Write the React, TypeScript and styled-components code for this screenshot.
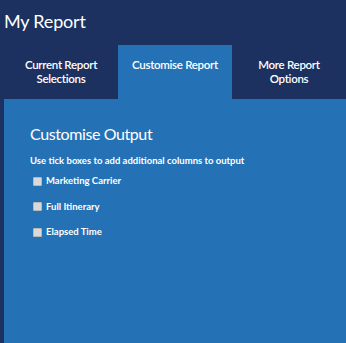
import styled, { createGlobalStyle } from 'styled-components';

const GlobalStyle = createGlobalStyle`
	html, body {
		margin: 0;
		padding: 0;
		height: 100%;
		background: #1c3160;
	}
	#root {
		height: 100%;
	}
	* {
		box-sizing: border-box;
	}
`;

const tabs = [
	{ id: 'current', label: 'Current Report Selections' },
	{ id: 'customise', label: 'Customise Report' },
	{ id: 'more', label: 'More Report Options' },
];

const columns = ['Marketing Carrier', 'Full Itinerary', 'Elapsed Time'];

export default function App() {
	const activeTab = 'customise';

	return (
		<>
			<GlobalStyle />
			<Page>
				<PageTitle>My Report</PageTitle>
				<TabBar>
					{tabs.map(tab => (
						<Tab key={tab.id} $active={tab.id === activeTab}>
							{tab.label}
						</Tab>
					))}
				</TabBar>
				<Panel>
					<PanelTitle>Customise Output</PanelTitle>
					<Hint>Use tick boxes to add additional columns to output</Hint>
					<OptionList>
						{columns.map(col => (
							<Option key={col}>
								<Box />
								{col}
							</Option>
						))}
					</OptionList>
				</Panel>
			</Page>
		</>
	);
}

const Page = styled.div`
	display: flex;
	flex-direction: column;
	height: 100%;
	padding-left: 4px;
	font-family: Lato, 'Open Sans', sans-serif;
	color: #ffffff;
`;

const PageTitle = styled.h1`
	margin: 0;
	padding: 10px 0 0 0;
	height: 45px;
	font-size: 18px;
	font-weight: 400;
	line-height: 22px;
	letter-spacing: -0.2px;
`;

const TabBar = styled.div`
	display: grid;
	grid-template-columns: repeat(3, 1fr);
	height: 54px;
`;

const Tab = styled.div<{ $active: boolean }>`
	padding: 13px 8px 0;
	text-align: center;
	font-size: 11.5px;
	font-weight: 600;
	line-height: 14px;
	letter-spacing: -0.3px;
	background: ${({ $active }) => ($active ? '#2472b5' : 'transparent')};
`;

const Panel = styled.div`
	flex: 1;
	background: #2472b5;
	padding: 25px 26px;
`;

const PanelTitle = styled.h2`
	margin: 0 0 11px;
	font-size: 16px;
	font-weight: 400;
	line-height: 20px;
	letter-spacing: -0.4px;
`;

const Hint = styled.p`
	margin: 0 0 8px;
	font-size: 9.5px;
	font-weight: 700;
	line-height: 12px;
`;

const OptionList = styled.div`
	display: flex;
	flex-direction: column;
	gap: 13.5px;
	padding-left: 3px;
`;

const Option = styled.label`
	display: flex;
	align-items: center;
	gap: 4px;
	font-size: 9.5px;
	font-weight: 700;
	line-height: 12px;
`;

const Box = styled.span`
	width: 9px;
	height: 9px;
	background: #d9d9d9;
	border: 1px solid #b8b8b8;
	border-radius: 1px;
`;
